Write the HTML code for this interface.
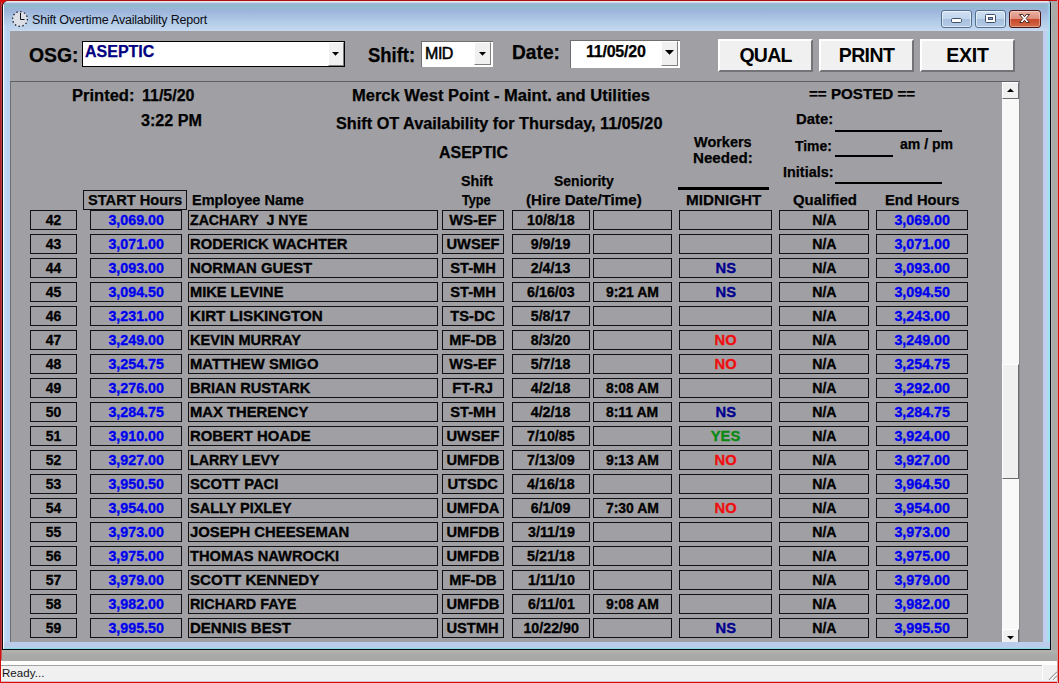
<!DOCTYPE html>
<html>
<head>
<meta charset="utf-8">
<title>Shift Overtime Availability Report</title>
<style>
*{box-sizing:border-box;margin:0;padding:0}
html,body{width:1059px;height:683px;overflow:hidden}
body{position:relative;background:#d60b0b;font-family:"Liberation Sans",sans-serif;color:#000}
.abs{position:absolute}
/* parent app area behind the window */
#desk{left:1px;top:1px;width:1056px;height:680px;background:#a9a9a8}
#deskr{left:1051px;top:1px;width:1px;height:649px;background:#bab6b8}
#edgeR{left:1057px;top:0;width:1px;height:683px;background:#cf9c9c}
#edgeB{left:1px;top:681px;width:1057px;height:1px;background:#e9b7b7}
#edgeL0{left:0;top:2px;width:1px;height:648px;background:#a81f27}
#edgeL{left:1px;top:2px;width:1px;height:648px;background:#bf4547}
#cornL{left:1px;top:1px;width:8px;height:8px;background:#d60b0b}
#edgeT{left:6px;top:0;width:1046px;height:1px;background:#ab1313}
#edgeL2{left:1px;top:650px;width:1px;height:10px;background:#c45a58}
/* status bar */
#stat{left:1px;top:661px;width:1056px;height:20px;background:#f0f0f0}
#statw{left:0;top:0;width:100%;height:4px;background:#fdfdfd}
#statl{left:0;top:4px;width:1041px;height:1px;background:#a3a3a3}
#statb{left:0;top:19px;width:100%;height:1px;background:#e3f6fb}
#ready{left:1px;top:5px;font-size:11.5px;line-height:14px;letter-spacing:0.05px;color:#151515}
/* window */
#win{left:2px;top:1px;width:1049px;height:649px;background:#bdd0ee;border-radius:6px 3px 0 0;overflow:hidden;
 border-left:1px solid #0a0a12;border-right:1px solid #05070e;border-bottom:1px solid #05100e}
#tbar{left:0;top:0;width:1047px;height:30px;
 background:linear-gradient(to bottom,#f3e2e8 0,#ecebf3 1px,#a9bfd9 2px,#98b5d3 3px,#97b6d2 4px,#90bbcd 5.5px,#93b9d2 7px,#9db4dc 9px,#9fb7dc 11px,#a9c2e2 16px,#b1cae7 20px,#bdd3ec 26px,#c6d9ef 30px)}
#frL{left:0;top:0;width:1px;height:648px;background:#fbfdff}
#frL2{left:1px;top:24px;width:6px;height:624px;background:linear-gradient(to right,#c4dbf5,#b7d2f0 3px,#b9d2ef)}
#frR{left:1040px;top:30px;width:7px;height:618px;background:linear-gradient(to right,#c3cdf0 0,#c3cdf0 3px,#b2dae5 4px,#a4dff4 5px,#9de1f9 7px)}
#frB{left:1px;top:641px;width:1046px;height:7px;background:linear-gradient(to bottom,#bccdec 0,#bccdec 5px,#9fdcee 6px,#7ed6e0 7px)}
#ttl{left:29px;top:10.5px;font-size:12.5px;line-height:16px;color:#0c0c14;white-space:nowrap;letter-spacing:-0.2px}
/* caption buttons */
.cb{top:9px;width:31px;height:18px;border:1px solid #54708f;border-radius:3px;
 background:linear-gradient(to bottom,#cfe0f3 0,#c1d5ed 48%,#a7c0de 52%,#b3cbe6 100%);box-shadow:inset 0 0 0 1px rgba(255,255,255,.55)}
#cbx{border-color:#4a1512;background:linear-gradient(to bottom,#eab1a3 0,#de8e7c 48%,#c8472c 52%,#d26a45 100%);box-shadow:inset 0 0 0 1px rgba(255,255,255,.35)}
/* client */
#cli{left:7px;top:30px;width:1033px;height:611px;background:#a0a0a4;overflow:hidden}
.lbl{font-weight:bold;white-space:nowrap}
.f14{font-size:19.5px;line-height:22px}
.f12{font-size:16px;line-height:20px}
.f11{font-size:15.5px;line-height:18px}
.lbl{transform-origin:0 20%;-webkit-text-stroke:0.25px}
.t{display:inline-block;transform:scale(0.92,1);transform-origin:50% 20%;-webkit-text-stroke:0.35px}
.c1 .t{transform:scale(0.9,1)}
.c2 .t,.c9 .t,.c5 .t{transform:scale(0.92,1)}
.c4 .t{transform:scale(0.945,1)}
.c6 .t{transform:scale(0.9,1)}
.c7 .t{transform:scale(0.95,1)}
.c8 .t{transform:scale(0.91,1)}
.c3 .t{transform-origin:0 20%;margin-left:0.9px}
/* combos */
.cmbbtn{background:#f0f0f0;border-top:1px solid #fff;border-left:1px solid #fff;border-right:1px solid #808080;border-bottom:1px solid #808080}
.arr{width:7px;height:4px}
.btn{top:8px;height:33px;background:#f0f0f0;border-top:2px solid #fff;border-left:2px solid #fff;border-right:2px solid #747478;border-bottom:2px solid #747478;
 font-weight:bold;font-size:19.5px;line-height:28px;text-align:center}
/* panel */
#pan{left:0;top:50px;width:1010px;height:561px;border-top:1px solid #5f5f66;border-left:1px solid #6e6e76}
/* scroll */
#sb{left:992px;top:51px;width:18px;height:560px;background:#f8f8f8;border-right:1px solid #8c8c90;overflow:hidden}
.sbb{left:0;width:17px;background:#f0f0f0;border-top:1px solid #fff;border-left:1px solid #fff;border-right:1px solid #6c6c70;border-bottom:1px solid #6c6c70}
/* rows */
.row{position:absolute;left:0;height:20px;width:1000px}
.c{position:absolute;top:0;height:20px;border:1px solid #111114;font-weight:bold;font-size:15.5px;line-height:18px;text-align:center;white-space:nowrap;overflow:hidden}
.c1{left:30px;width:47px}
.c2{left:90px;width:92px}
.c3{left:188px;width:250px;text-align:left;padding-left:0}
.c4{left:442px;width:62px}
.c5{left:512px;width:78px}
.c6{left:593px;width:79px}
.c7{left:679px;width:93px}
.c8{left:779px;width:90px}
.c9{left:876px;width:92px}
.bl{color:#0000ee}
.ns{color:#000090}
.no{color:#ee1010}
.yes{color:#0a8a10}
.hl{background:#000}
</style>
</head>
<body>
<div class="abs" id="desk"></div>
<div class="abs" id="deskr"></div><div class="abs" style="left:1px;top:650px;width:1056px;height:11px;background:linear-gradient(to bottom,#b3b3b2 0,#adadac 3px,#a8a8a7 6px,#a8a8a7 100%)"></div>
<div class="abs" id="stat">
  <div class="abs" id="statw"></div><div class="abs" id="statl"></div><div class="abs" id="statb"></div>
  <div class="abs" style="left:1041px;top:4px;width:1px;height:15px;background:#fff"></div>
  <svg class="abs" style="left:1044px;top:7px" width="12" height="12" viewBox="0 0 12 12"><path d="M4 12L12 4M8 12L12 8" stroke="#9a9a9a" stroke-width="1.1" fill="none"/><path d="M5.2 12L12 5.2M9.2 12L12 9.2" stroke="#fff" stroke-width="1" fill="none"/></svg>
  <div class="abs" id="ready">Ready...</div>
</div>
<div class="abs" id="cornL"></div><div class="abs" id="edgeT"></div><div class="abs" id="edgeL0"></div><div class="abs" id="edgeL"></div><div class="abs" id="edgeL2"></div><div class="abs" id="edgeR"></div><div class="abs" id="edgeB"></div>

<div class="abs" id="win">
  <div class="abs" id="tbar"></div>
  <div class="abs" id="frL2"></div><div class="abs" id="frL"></div><div class="abs" id="frR"></div><div class="abs" style="left:1044px;top:3px;width:3px;height:27px;background:linear-gradient(to right,rgba(160,224,248,0),rgba(160,224,248,.9))"></div><div class="abs" id="frB"></div>
  <svg class="abs" style="left:8px;top:8.5px" width="18" height="18" viewBox="0 0 18 18">
    <circle cx="9" cy="9" r="7.4" fill="#dcdfe8" stroke="#16161c" stroke-width="1.3" stroke-dasharray="1.4 2.47"/>
    <path d="M9.5 3V9.5H13.5" fill="none" stroke="#111" stroke-width="1"/>
  </svg>
  <div class="abs" id="ttl">Shift Overtime Availability Report</div>
  <div class="abs cb" style="left:938px"><svg class="abs" style="left:9px;top:7px" width="12" height="6"><rect x="0.5" y="0.5" width="10" height="4" rx="1.2" fill="#fff" stroke="#3f4f68"/></svg></div>
  <div class="abs cb" style="left:972px"><svg class="abs" style="left:9px;top:3px" width="12" height="10"><rect x="0.5" y="0.5" width="10" height="8" rx="1" fill="#fff" stroke="#3f4f68"/><rect x="3.5" y="3.5" width="4" height="2" fill="#8fa6c4" stroke="#3f4f68"/></svg></div>
  <div class="abs cb" id="cbx" style="left:1006px;width:32px"><svg class="abs" style="left:9px;top:3px" width="11" height="9" viewBox="0 0 11 9"><path d="M0.5 0.5H3.7L5.5 2.8L7.3 0.5H10.5L7.2 4.5L10.5 8.5H7.3L5.5 6.2L3.7 8.5H0.5L3.8 4.5Z" fill="#fff" stroke="#4a2a24" stroke-width="1" stroke-linejoin="round"/></svg></div>

  <div class="abs" id="cli">
    <!-- toolbar -->
    <div class="abs" style="left:72px;top:10px;width:263px;height:26px;background:#fff;border:1px solid #000">
      <div class="abs lbl f12" id="c_asep" style="left:2px;top:0px;color:#000080;letter-spacing:0px">ASEPTIC</div>
      <div class="abs cmbbtn" style="left:245px;top:0;width:16px;height:24px"><svg class="abs arr" style="left:3px;top:9px" viewBox="0 0 7 4"><path d="M0 0H7L3.5 3.7Z"/></svg></div>
    </div>
    <div class="abs" style="left:411px;top:10px;width:72px;height:26px;background:#fff;border-top:1px solid #6e6e6e;border-left:1px solid #6e6e6e">
      <div class="abs f12" id="c_mid" style="letter-spacing:-0.45px;left:3px;top:2px;-webkit-text-stroke:0.5px #000">MID</div>
      <div class="abs cmbbtn" style="left:52px;top:0;width:17px;height:23px"><svg class="abs arr" style="left:4px;top:9px" viewBox="0 0 7 4"><path d="M0 0H7L3.5 3.7Z"/></svg></div>
    </div>
    <div class="abs" style="left:560px;top:9px;width:110px;height:28px;background:#fff;border-top:1px solid #6e6e6e;border-left:1px solid #6e6e6e">
      <div class="abs lbl f12" id="c_date" style="letter-spacing:-0.23px;left:15px;top:1px">11/05/20</div>
      <div class="abs cmbbtn" style="left:90px;top:0;width:17px;height:25px"><svg class="abs" style="left:3px;top:8px;width:9px;height:5px" viewBox="0 0 9 5"><path d="M0 0H9L4.5 4.7Z"/></svg></div>
    </div>
    <div class="abs btn" style="letter-spacing:-0.75px;left:708px;width:95px" id="b_qual">QUAL</div>
    <div class="abs btn" style="letter-spacing:-0.6px;left:809px;width:95px" id="b_print">PRINT</div>
    <div class="abs btn" style="letter-spacing:-0.25px;left:910px;width:95px" id="b_exit">EXIT</div>

    <!-- report panel -->
    <div class="abs" id="pan"></div>
    <div class="abs" id="sb">
      <div class="abs sbb" style="top:0;height:17px"><svg class="abs arr" style="left:4px;top:5px" viewBox="0 0 7 4"><path d="M0 4H7L3.5 0.5Z"/></svg></div>
      <div class="abs sbb" style="top:282px;height:115px"></div>
      <div class="abs sbb" style="top:547px;height:17px"><svg class="abs arr" style="left:4px;top:6px" viewBox="0 0 7 4"><path d="M0 0H7L3.5 3.5Z"/></svg></div>
    </div>

    <!-- everything below is positioned in page coords via #rep offset -->
    <div class="abs" id="rep" style="left:-10px;top:-31px;width:1010px;height:672px">

      <div class="abs hl" style="left:835px;top:130px;width:107px;height:2px"></div>
      <div class="abs hl" style="left:835px;top:155px;width:58px;height:2px"></div>
      <div class="abs hl" style="left:835px;top:182px;width:107px;height:2px"></div>
      <div class="abs hl" style="left:678px;top:187px;width:91px;height:3px"></div>

      <div class="abs lbl f11" style="letter-spacing:-0.2px;left:83px;top:190px;width:104px;height:20px;border:1px solid #111114"></div>
      <div class="abs lbl f14" id="l_osg" style="left:28.62px;top:44px;transform:scale(0.9942,1.0)">OSG:</div>
      <div class="abs lbl f14" id="l_shift" style="left:368.00px;top:44px;transform:scale(0.9443,1.0)">Shift:</div>
      <div class="abs lbl f14" id="l_date" style="left:512.20px;top:41px;transform:scale(0.9829,1.0)">Date:</div>
      <div class="abs lbl f12" id="l_printed" style="left:71.88px;top:85.5px;transform:scale(1.0331,1.0)">Printed:</div>
      <div class="abs lbl f12" id="l_pdate" style="left:142.00px;top:85.5px;transform:scale(1.0000,1.0)">11/5/20</div>
      <div class="abs lbl f12" id="l_ptime" style="left:141.44px;top:110.5px;transform:scale(1.0086,1.0)">3:22 PM</div>
      <div class="abs lbl f12" id="l_merck" style="left:351.62px;top:85.5px;transform:scale(1.0322,1.0)">Merck West Point - Maint. and Utilities</div>
      <div class="abs lbl f12" id="l_sot" style="left:335.62px;top:113.5px;transform:scale(1.0160,1.0)">Shift OT Availability for Thursday, 11/05/20</div>
      <div class="abs lbl f12" id="l_asep" style="left:438.62px;top:142.5px;transform:scale(0.9958,1.0)">ASEPTIC</div>
      <div class="abs lbl f11" id="l_posted" style="left:809.38px;top:84.8px;transform:scale(0.9786,1.0)">== POSTED ==</div>
      <div class="abs lbl f11" id="l_date2" style="left:796.44px;top:109.9px;transform:scale(0.9613,1.0)">Date:</div>
      <div class="abs lbl f11" id="l_time" style="left:795.24px;top:136.5px;transform:scale(0.8967,1.0)">Time:</div>
      <div class="abs lbl f11" id="l_ampm" style="left:900.00px;top:134.8px;transform:scale(0.9060,1.0)">am / pm</div>
      <div class="abs lbl f11" id="l_init" style="left:782.50px;top:162.8px;transform:scale(0.9311,1.0)">Initials:</div>
      <div class="abs lbl f11" id="l_work" style="left:694.48px;top:132.8px;transform:scale(0.9335,1.0)">Workers</div>
      <div class="abs lbl f11" id="l_need" style="left:692.88px;top:149.1px;transform:scale(0.9757,1.0)">Needed:</div>
      <div class="abs lbl f11" id="l_start" style="left:88.28px;top:190.7px;transform:scale(0.9446,1.0)">START Hours</div>
      <div class="abs lbl f11" id="l_emp" style="left:192.44px;top:190.7px;transform:scale(0.9342,1.0)">Employee Name</div>
      <div class="abs lbl f11" id="l_sh" style="left:460.56px;top:171.6px;transform:scale(0.9225,1.0)">Shift</div>
      <div class="abs lbl f11" id="l_ty" style="left:462.30px;top:190.6px;transform:scale(0.8183,1.0)">Type</div>
      <div class="abs lbl f11" id="l_sen" style="left:554.12px;top:171.6px;transform:scale(0.9017,1.0)">Seniority</div>
      <div class="abs lbl f11" id="l_hire" style="left:526.44px;top:190.6px;transform:scale(0.9759,1.0)">(Hire Date/Time)</div>
      <div class="abs lbl f11" id="l_mid" style="left:685.50px;top:190.7px;transform:scale(0.9822,1.0)">MIDNIGHT</div>
      <div class="abs lbl f11" id="l_qual" style="left:792.56px;top:190.7px;transform:scale(0.9620,1.0)">Qualified</div>
      <div class="abs lbl f11" id="l_end" style="left:884.56px;top:190.7px;transform:scale(0.9505,1.0)">End Hours</div>
<div class="row" style="top:210px"><div class="c c1"><span class="t">42</span></div><div class="c c2 bl"><span class="t">3,069.00</span></div><div class="c c3"><span class="t" id="n0" style="transform:scale(0.9124,1)">ZACHARY&nbsp; J NYE</span></div><div class="c c4"><span class="t">WS-EF</span></div><div class="c c5"><span class="t">10/8/18</span></div><div class="c c6"></div><div class="c c7 "></div><div class="c c8"><span class="t">N/A</span></div><div class="c c9 bl"><span class="t">3,069.00</span></div></div>
<div class="row" style="top:234px"><div class="c c1"><span class="t">43</span></div><div class="c c2 bl"><span class="t">3,071.00</span></div><div class="c c3"><span class="t" id="n1" style="transform:scale(0.9523,1)">RODERICK WACHTER</span></div><div class="c c4"><span class="t">UWSEF</span></div><div class="c c5"><span class="t">9/9/19</span></div><div class="c c6"></div><div class="c c7 "></div><div class="c c8"><span class="t">N/A</span></div><div class="c c9 bl"><span class="t">3,071.00</span></div></div>
<div class="row" style="top:258px"><div class="c c1"><span class="t">44</span></div><div class="c c2 bl"><span class="t">3,093.00</span></div><div class="c c3"><span class="t" id="n2" style="transform:scale(0.9586,1)">NORMAN GUEST</span></div><div class="c c4"><span class="t">ST-MH</span></div><div class="c c5"><span class="t">2/4/13</span></div><div class="c c6"></div><div class="c c7 ns"><span class="t">NS</span></div><div class="c c8"><span class="t">N/A</span></div><div class="c c9 bl"><span class="t">3,093.00</span></div></div>
<div class="row" style="top:282px"><div class="c c1"><span class="t">45</span></div><div class="c c2 bl"><span class="t">3,094.50</span></div><div class="c c3"><span class="t" id="n3" style="transform:scale(0.9434,1)">MIKE LEVINE</span></div><div class="c c4"><span class="t">ST-MH</span></div><div class="c c5"><span class="t">6/16/03</span></div><div class="c c6"><span class="t">9:21 AM</span></div><div class="c c7 ns"><span class="t">NS</span></div><div class="c c8"><span class="t">N/A</span></div><div class="c c9 bl"><span class="t">3,094.50</span></div></div>
<div class="row" style="top:306px"><div class="c c1"><span class="t">46</span></div><div class="c c2 bl"><span class="t">3,231.00</span></div><div class="c c3"><span class="t" id="n4" style="transform:scale(0.9782,1)">KIRT LISKINGTON</span></div><div class="c c4"><span class="t">TS-DC</span></div><div class="c c5"><span class="t">5/8/17</span></div><div class="c c6"></div><div class="c c7 "></div><div class="c c8"><span class="t">N/A</span></div><div class="c c9 bl"><span class="t">3,243.00</span></div></div>
<div class="row" style="top:330px"><div class="c c1"><span class="t">47</span></div><div class="c c2 bl"><span class="t">3,249.00</span></div><div class="c c3"><span class="t" id="n5" style="transform:scale(0.9382,1)">KEVIN MURRAY</span></div><div class="c c4"><span class="t">MF-DB</span></div><div class="c c5"><span class="t">8/3/20</span></div><div class="c c6"></div><div class="c c7 no"><span class="t">NO</span></div><div class="c c8"><span class="t">N/A</span></div><div class="c c9 bl"><span class="t">3,249.00</span></div></div>
<div class="row" style="top:354px"><div class="c c1"><span class="t">48</span></div><div class="c c2 bl"><span class="t">3,254.75</span></div><div class="c c3"><span class="t" id="n6" style="transform:scale(0.9583,1)">MATTHEW SMIGO</span></div><div class="c c4"><span class="t">WS-EF</span></div><div class="c c5"><span class="t">5/7/18</span></div><div class="c c6"></div><div class="c c7 no"><span class="t">NO</span></div><div class="c c8"><span class="t">N/A</span></div><div class="c c9 bl"><span class="t">3,254.75</span></div></div>
<div class="row" style="top:378px"><div class="c c1"><span class="t">49</span></div><div class="c c2 bl"><span class="t">3,276.00</span></div><div class="c c3"><span class="t" id="n7" style="transform:scale(0.9391,1)">BRIAN RUSTARK</span></div><div class="c c4"><span class="t">FT-RJ</span></div><div class="c c5"><span class="t">4/2/18</span></div><div class="c c6"><span class="t">8:08 AM</span></div><div class="c c7 "></div><div class="c c8"><span class="t">N/A</span></div><div class="c c9 bl"><span class="t">3,292.00</span></div></div>
<div class="row" style="top:402px"><div class="c c1"><span class="t">50</span></div><div class="c c2 bl"><span class="t">3,284.75</span></div><div class="c c3"><span class="t" id="n8" style="transform:scale(0.9545,1)">MAX THERENCY</span></div><div class="c c4"><span class="t">ST-MH</span></div><div class="c c5"><span class="t">4/2/18</span></div><div class="c c6"><span class="t">8:11 AM</span></div><div class="c c7 ns"><span class="t">NS</span></div><div class="c c8"><span class="t">N/A</span></div><div class="c c9 bl"><span class="t">3,284.75</span></div></div>
<div class="row" style="top:426px"><div class="c c1"><span class="t">51</span></div><div class="c c2 bl"><span class="t">3,910.00</span></div><div class="c c3"><span class="t" id="n9" style="transform:scale(0.9602,1)">ROBERT HOADE</span></div><div class="c c4"><span class="t">UWSEF</span></div><div class="c c5"><span class="t">7/10/85</span></div><div class="c c6"></div><div class="c c7 yes"><span class="t">YES</span></div><div class="c c8"><span class="t">N/A</span></div><div class="c c9 bl"><span class="t">3,924.00</span></div></div>
<div class="row" style="top:450px"><div class="c c1"><span class="t">52</span></div><div class="c c2 bl"><span class="t">3,927.00</span></div><div class="c c3"><span class="t" id="n10" style="transform:scale(0.9192,1)">LARRY LEVY</span></div><div class="c c4"><span class="t">UMFDB</span></div><div class="c c5"><span class="t">7/13/09</span></div><div class="c c6"><span class="t">9:13 AM</span></div><div class="c c7 no"><span class="t">NO</span></div><div class="c c8"><span class="t">N/A</span></div><div class="c c9 bl"><span class="t">3,927.00</span></div></div>
<div class="row" style="top:474px"><div class="c c1"><span class="t">53</span></div><div class="c c2 bl"><span class="t">3,950.50</span></div><div class="c c3"><span class="t" id="n11" style="transform:scale(0.9526,1)">SCOTT PACI</span></div><div class="c c4"><span class="t">UTSDC</span></div><div class="c c5"><span class="t">4/16/18</span></div><div class="c c6"></div><div class="c c7 "></div><div class="c c8"><span class="t">N/A</span></div><div class="c c9 bl"><span class="t">3,964.50</span></div></div>
<div class="row" style="top:498px"><div class="c c1"><span class="t">54</span></div><div class="c c2 bl"><span class="t">3,954.00</span></div><div class="c c3"><span class="t" id="n12" style="transform:scale(0.9356,1)">SALLY PIXLEY</span></div><div class="c c4"><span class="t">UMFDA</span></div><div class="c c5"><span class="t">6/1/09</span></div><div class="c c6"><span class="t">7:30 AM</span></div><div class="c c7 no"><span class="t">NO</span></div><div class="c c8"><span class="t">N/A</span></div><div class="c c9 bl"><span class="t">3,954.00</span></div></div>
<div class="row" style="top:522px"><div class="c c1"><span class="t">55</span></div><div class="c c2 bl"><span class="t">3,973.00</span></div><div class="c c3"><span class="t" id="n13" style="transform:scale(0.9577,1)">JOSEPH CHEESEMAN</span></div><div class="c c4"><span class="t">UMFDB</span></div><div class="c c5"><span class="t">3/11/19</span></div><div class="c c6"></div><div class="c c7 "></div><div class="c c8"><span class="t">N/A</span></div><div class="c c9 bl"><span class="t">3,973.00</span></div></div>
<div class="row" style="top:546px"><div class="c c1"><span class="t">56</span></div><div class="c c2 bl"><span class="t">3,975.00</span></div><div class="c c3"><span class="t" id="n14" style="transform:scale(0.9468,1)">THOMAS NAWROCKI</span></div><div class="c c4"><span class="t">UMFDB</span></div><div class="c c5"><span class="t">5/21/18</span></div><div class="c c6"></div><div class="c c7 "></div><div class="c c8"><span class="t">N/A</span></div><div class="c c9 bl"><span class="t">3,975.00</span></div></div>
<div class="row" style="top:570px"><div class="c c1"><span class="t">57</span></div><div class="c c2 bl"><span class="t">3,979.00</span></div><div class="c c3"><span class="t" id="n15" style="transform:scale(0.9745,1)">SCOTT KENNEDY</span></div><div class="c c4"><span class="t">MF-DB</span></div><div class="c c5"><span class="t">1/11/10</span></div><div class="c c6"></div><div class="c c7 "></div><div class="c c8"><span class="t">N/A</span></div><div class="c c9 bl"><span class="t">3,979.00</span></div></div>
<div class="row" style="top:594px"><div class="c c1"><span class="t">58</span></div><div class="c c2 bl"><span class="t">3,982.00</span></div><div class="c c3"><span class="t" id="n16" style="transform:scale(0.9267,1)">RICHARD FAYE</span></div><div class="c c4"><span class="t">UMFDB</span></div><div class="c c5"><span class="t">6/11/01</span></div><div class="c c6"><span class="t">9:08 AM</span></div><div class="c c7 "></div><div class="c c8"><span class="t">N/A</span></div><div class="c c9 bl"><span class="t">3,982.00</span></div></div>
<div class="row" style="top:618px"><div class="c c1"><span class="t">59</span></div><div class="c c2 bl"><span class="t">3,995.50</span></div><div class="c c3"><span class="t" id="n17" style="transform:scale(0.9674,1)">DENNIS BEST</span></div><div class="c c4"><span class="t">USTMH</span></div><div class="c c5"><span class="t">10/22/90</span></div><div class="c c6"></div><div class="c c7 ns"><span class="t">NS</span></div><div class="c c8"><span class="t">N/A</span></div><div class="c c9 bl"><span class="t">3,995.50</span></div></div>
    </div>
  </div>
</div>
</body>
</html>
